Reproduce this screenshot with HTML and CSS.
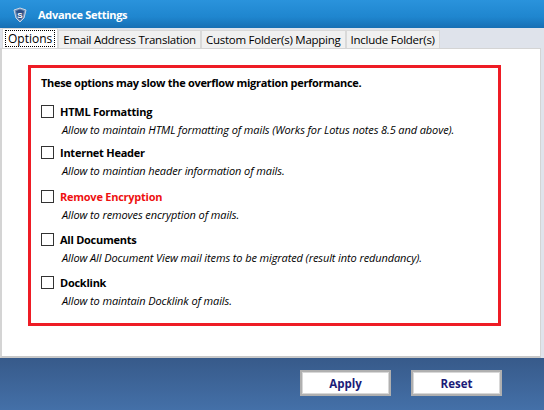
FILE: index.html
```html
<!DOCTYPE html>
<html>
<head>
<meta charset="utf-8">
<link rel="stylesheet" href="styles.css">
</head>
<body>
<div class="window">
  <div class="titlebar">
    <svg class="appicon" width="16" height="16" viewBox="0 0 16 16">
      <path d="M2 3 L8 1 L14 3 L12 11 L8 15 L4 11 Z" fill="#6f8fb8" stroke="#c8d4e4" stroke-width="1"/>
      <path d="M4 4 L8 2.5 L12 4 L10.5 10.5 L8 13 L5.5 10.5 Z" fill="#2c4f86"/>
      <text x="8" y="10.5" font-size="8" font-weight="bold" fill="#ffffff" text-anchor="middle" font-family="Liberation Sans, sans-serif">S</text>
    </svg>
    <span class="title">Advance Settings</span>
  </div>
  <div class="tabs">
    <div class="tab active"><span class="focus">Options</span></div>
    <div class="tab">Email Address Translation</div>
    <div class="tab">Custom Folder(s) Mapping</div>
    <div class="tab">Include Folder(s)</div>
  </div>
  <div class="panel">
    <div class="redbox">
      <div class="heading">These options may slow the overflow migration performance.</div>
      <div class="opt opt-first">
        <div class="optline"><span class="cb"></span><span class="label">HTML Formatting</span></div>
        <div class="desc">Allow to maintain HTML formatting of mails (Works for Lotus notes 8.5 and above).</div>
      </div>
      <div class="opt opt-second">
        <div class="optline"><span class="cb"></span><span class="label">Internet Header</span></div>
        <div class="desc">Allow to maintian header information of mails.</div>
      </div>
      <div class="opt">
        <div class="optline"><span class="cb"></span><span class="label red">Remove Encryption</span></div>
        <div class="desc">Allow to removes encryption of mails.</div>
      </div>
      <div class="opt">
        <div class="optline"><span class="cb"></span><span class="label">All Documents</span></div>
        <div class="desc">Allow All Document View mail items to be migrated (result into redundancy).</div>
      </div>
      <div class="opt">
        <div class="optline"><span class="cb"></span><span class="label">Docklink</span></div>
        <div class="desc">Allow to maintain Docklink of mails.</div>
      </div>
    </div>
  </div>
  <div class="footer">
    <button class="btn">Apply</button>
    <button class="btn">Reset</button>
  </div>
</div>
</body>
</html>
```
FILE: styles.css
```css
html, body {
  margin: 0;
  padding: 0;
}
body {
  width: 544px;
  height: 410px;
  overflow: hidden;
  font-family: "Open Sans", "Noto Sans", sans-serif;
  font-size: 11px;
  color: #000;
  background: #dfe3eb;
}
.window {
  display: flex;
  flex-direction: column;
  height: 410px;
}
.titlebar {
  height: 28px;
  flex: none;
  display: flex;
  align-items: center;
  background: linear-gradient(to bottom, #2a93dc 0%, #1f86cf 60%, #176fb4 100%);
  padding-left: 12px;
}
.appicon {
  flex: none;
  margin-top: 1px;
}
.title {
  margin-left: 10px;
  color: #fff;
  font-weight: bold;
  font-size: 11px;
  letter-spacing: -0.3px;
}
.tabs {
  height: 20px;
  flex: none;
  display: flex;
  align-items: flex-end;
  padding-left: 2px;
  background: #dfe3eb;
}
.tab {
  height: 18px;
  box-sizing: border-box;
  padding: 0 4px;
  background: #f0f0f0;
  border: 1px solid #d9d9d9;
  border-bottom: none;
  line-height: 17px;
  font-size: 11.5px;
  letter-spacing: -0.25px;
  white-space: nowrap;
}
.tab.active {
  height: 20px;
  background: #fff;
  padding: 1px 2px 0;
  line-height: 16px;
  position: relative;
  z-index: 1;
  letter-spacing: 0;
  font-size: 12px;
}
.focus {
  display: inline-block;
  border: 1px dotted #000;
  padding: 0 2px;
  line-height: 15px;
}
.panel {
  height: 310px;
  flex: none;
  box-sizing: border-box;
  margin-right: 3px;
  background: #fff;
  border: 1px solid #d4d4d4;
  border-left: 2px solid #d4d4d4;
  border-bottom: 2px solid #c8c8c8;
  padding: 16px 0 0 26px;
}
.redbox {
  width: 473px;
  height: 261px;
  box-sizing: border-box;
  border: 3px solid #ee1c25;
  padding: 7px 0 0 10px;
}
.heading {
  font-weight: bold;
  font-size: 11px;
  letter-spacing: -0.3px;
  line-height: 16px;
  height: 27px;
}
.opt {
  height: 43px;
}
.opt-first {
  height: 41px;
}
.opt-second {
  height: 44px;
}
.optline {
  display: flex;
  align-items: center;
  height: 18px;
}
.cb {
  width: 13px;
  height: 13px;
  box-sizing: border-box;
  border: 1px solid #333;
  background: #fff;
  flex: none;
}
.label {
  margin-left: 6px;
  font-weight: bold;
  font-size: 11px;
  letter-spacing: -0.25px;
}
.label.red {
  color: #ee1111;
}
.desc {
  margin-top: 1px;
  padding-left: 21px;
  font-style: italic;
  font-size: 11px;
  letter-spacing: -0.1px;
  line-height: 18px;
}
.footer {
  flex: 1;
  background: linear-gradient(to bottom, #375a8a 0%, #4470a8 100%);
  display: flex;
  justify-content: flex-end;
  align-items: flex-start;
  padding: 12px 42px 0 0;
  gap: 20px;
}
.btn {
  width: 91px;
  height: 26px;
  box-sizing: border-box;
  background: #fff;
  border: 2px solid #b0b0b0;
  outline: 1px solid #d8d8d8;
  outline-offset: -3px;
  font-family: inherit;
  font-size: 11.5px;
  font-weight: bold;
  color: #1b1b78;
  padding: 0;
}
```
